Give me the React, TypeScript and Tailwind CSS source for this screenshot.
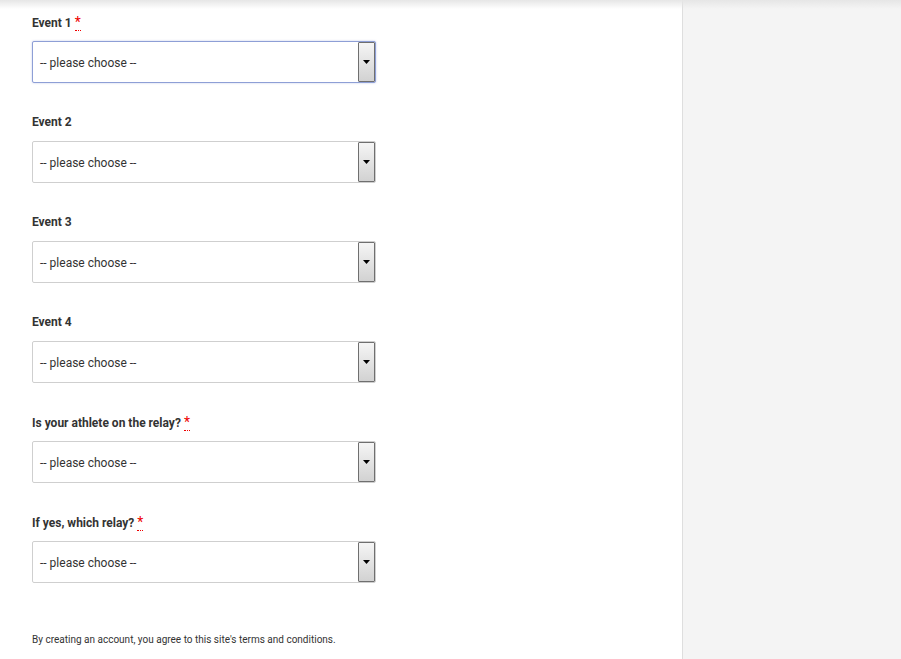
import React from 'react';

const fields = [
  { id: 'event1', label: 'Event 1', required: true, focused: true },
  { id: 'event2', label: 'Event 2', required: false },
  { id: 'event3', label: 'Event 3', required: false },
  { id: 'event4', label: 'Event 4', required: false },
  { id: 'relay', label: 'Is your athlete on the relay?', required: true },
  { id: 'which', label: 'If yes, which relay?', required: true },
];

const SelectBox: React.FC<{ focused?: boolean }> = ({ focused }) => (
  <div
    className={`w-[344px] h-[42px] rounded-[2px] border bg-white flex items-center justify-between pl-[7px] pr-0 ${
      focused ? 'border-[#8e9fd6] shadow-[0_0_2px_rgba(120,140,210,0.5)]' : 'border-[#cfcfcf]'
    }`}
  >
    <span className="text-[12px] text-[#333] pt-[1px]">-- please choose --</span>
    <span className="h-[40px] w-[17px] border border-[#6f6f6f] rounded-[1px] bg-gradient-to-b from-[#f5f5f5] to-[#d2d2d2] flex items-center justify-center">
      <svg width="7" height="4" viewBox="0 0 7 4">
        <path d="M0 0h7L3.5 4z" fill="#000" />
      </svg>
    </span>
  </div>
);

export default function App() {
  return (
    <div className="relative w-[901px] h-[659px] flex overflow-hidden font-['Roboto',sans-serif] text-[#333]">
      {/* shadow from the header above */}
      <div className="absolute left-0 top-0 w-full h-[9px] bg-gradient-to-b from-[#e6e6e6] to-transparent" />

      <div className="w-[682px] bg-white pl-[32px] pt-[13px]">
        {fields.map(f => (
          <div key={f.id} className="h-[100px]">
            <div className="h-[28px] text-[12px] font-bold leading-[16px] pt-[1px]">
              {f.label}
              {f.required && (
                <abbr
                  title="required"
                  className="ml-[3px] text-[#e00] no-underline border-b border-dotted border-[#e00] text-[14px] font-normal"
                >
                  *
                </abbr>
              )}
            </div>
            <SelectBox focused={f.focused} />
          </div>
        ))}
        <p className="mt-[19px] text-[10px] text-[#333]">
          By creating an account, you agree to this site's terms and conditions.
        </p>
      </div>

      <div className="flex-1 bg-[#f4f4f4] border-l border-[#dedede]" />
    </div>
  );
}
